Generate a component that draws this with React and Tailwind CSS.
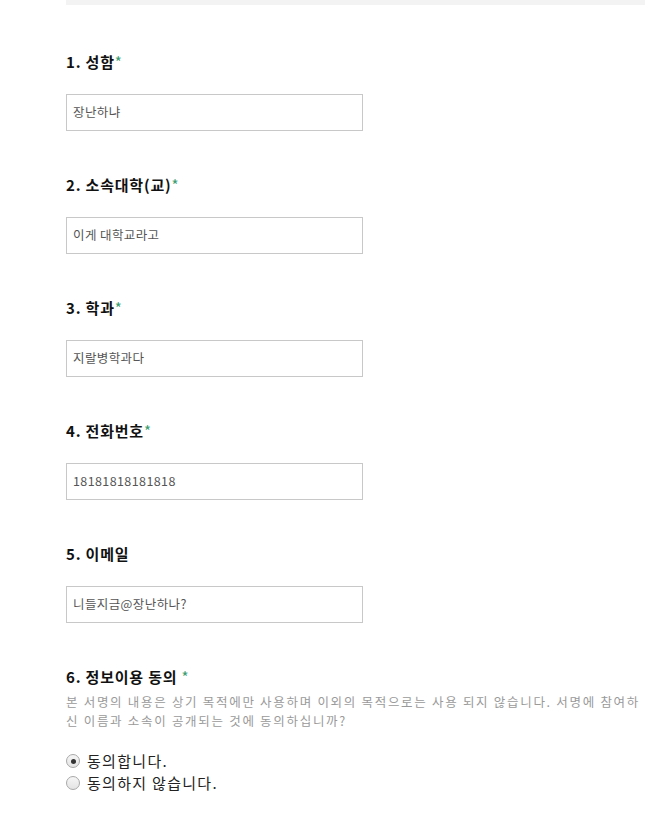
const fields = [
  { no: 1, label: "성함", required: true, value: "장난하냐" },
  { no: 2, label: "소속대학(교)", required: true, value: "이게 대학교라고" },
  { no: 3, label: "학과", required: true, value: "지랄병학과다" },
  { no: 4, label: "전화번호", required: true, value: "18181818181818" },
  { no: 5, label: "이메일", required: false, value: "니들지금@장난하나?" },
]

function Radio({ checked, label }) {
  return (
    <label className="flex items-center h-[22px]">
      <span className="w-[14px] h-[14px] rounded-full border border-[#a8a8a8] bg-gradient-to-b from-[#f6f6f6] to-[#e4e4e4] flex items-center justify-center">
        {checked && <span className="w-[5px] h-[5px] rounded-full bg-[#333]" />}
      </span>
      <span className="ml-[7px] text-[15px] tracking-[1.3px] text-[#222]">{label}</span>
    </label>
  )
}

export default function App() {
  return (
    <div className="bg-white min-h-[834px] font-['Noto_Sans_CJK_KR','Liberation_Sans',sans-serif]">
      <div className="ml-[66px] w-[579px]">
        <div className="h-[5px] bg-[#f3f3f3]" />

        <div className="pt-[46px] flex flex-col gap-[43px]">
          {fields.map((f) => (
            <div key={f.no}>
              <div className="h-[22px] leading-[22px] text-[15px] font-bold tracking-[0.8px] text-[#111]">
                {f.no}. {f.label}
                {f.required && <span className="text-[#3a9d6f] font-normal">*</span>}
              </div>
              <div className="mt-[21px] w-[297px] h-[37px] border border-[#c8c8c8] flex items-center px-[6px] text-[12.5px] tracking-[0.4px] text-[#555]">
                {f.value}
              </div>
            </div>
          ))}

          <div>
            <div className="h-[22px] leading-[22px] text-[15px] font-bold tracking-[0.8px] text-[#111]">
              6. 정보이용 동의 <span className="text-[#3a9d6f] font-normal">*</span>
            </div>
            <p className="mt-[4px] text-[12.5px] leading-[19px] tracking-[1.7px] text-[#9a9a9a] whitespace-nowrap">
              본 서명의 내용은 상기 목적에만 사용하며 이외의 목적으로는 사용 되지 않습니다. 서명에 참여하
              <br />
              신 이름과 소속이 공개되는 것에 동의하십니까?
            </p>
            <div className="mt-[20px] flex flex-col">
              <Radio checked label="동의합니다." />
              <Radio label="동의하지 않습니다." />
            </div>
          </div>
        </div>
      </div>
    </div>
  )
}
